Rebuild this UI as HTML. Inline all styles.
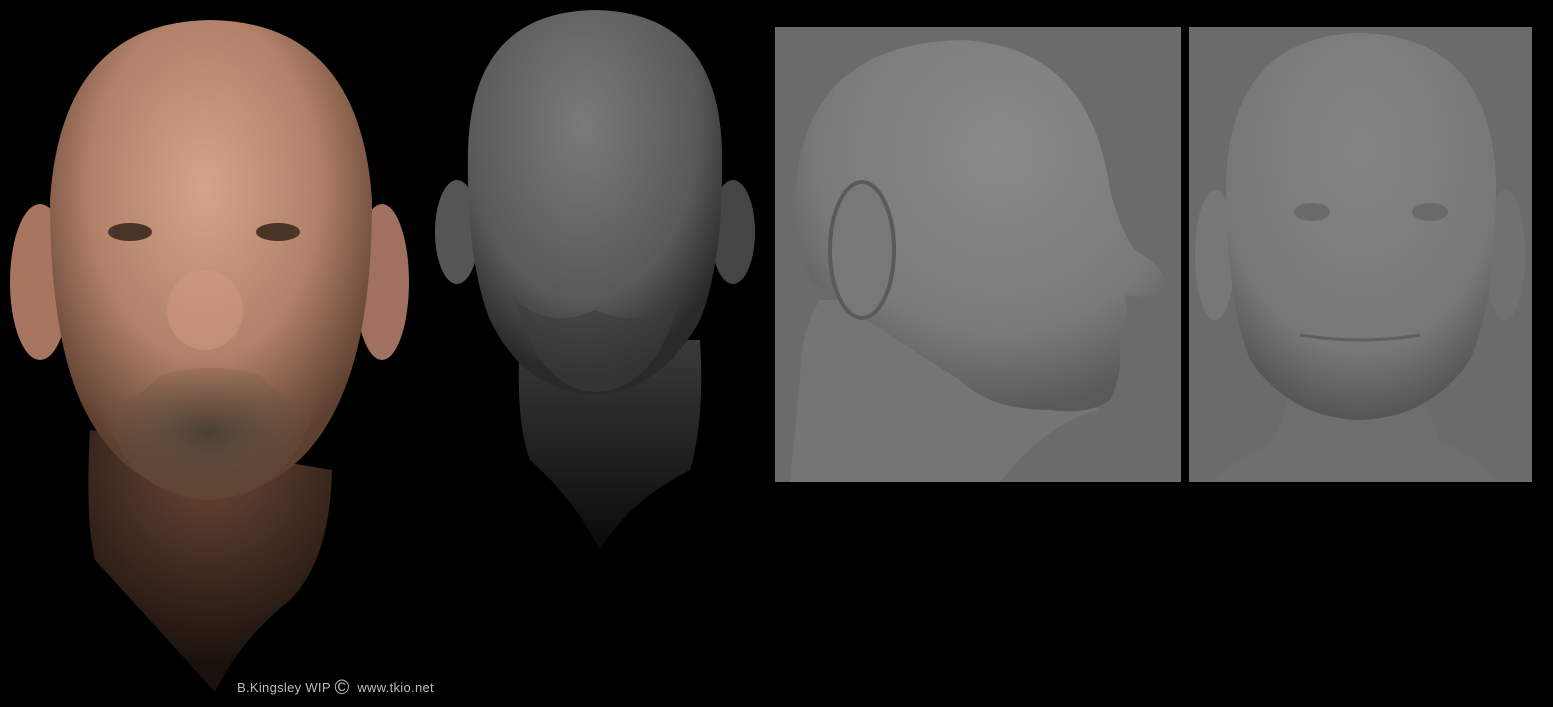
<!DOCTYPE html>
<html><head><meta charset="utf-8"><style>
html,body{margin:0;padding:0;background:#000;}
body{width:1553px;height:707px;overflow:hidden;position:relative;font-family:"Liberation Sans",sans-serif;}
.t{position:absolute;left:237px;top:677px;color:#b8bcc4;font-size:13px;letter-spacing:0.3px;white-space:nowrap;}
</style></head><body>
<svg width="1553" height="707" viewBox="0 0 1553 707" style="position:absolute;left:0;top:0">
<defs>
<radialGradient id="skin" cx="0.48" cy="0.35" r="0.6">
<stop offset="0" stop-color="#d3a48a"/><stop offset="0.6" stop-color="#b08068"/><stop offset="1" stop-color="#5e4030"/></radialGradient>
<radialGradient id="neck1" cx="0.5" cy="0.1" r="0.8">
<stop offset="0" stop-color="#6e4a38"/><stop offset="1" stop-color="#1a110c"/></radialGradient>
<radialGradient id="beard" cx="0.5" cy="0.5" r="0.5">
<stop offset="0" stop-color="#4a4034"/><stop offset="1" stop-color="#6b5442" stop-opacity="0.2"/></radialGradient>
<radialGradient id="g2" cx="0.45" cy="0.3" r="0.65">
<stop offset="0" stop-color="#7a7a7a"/><stop offset="0.7" stop-color="#595959"/><stop offset="1" stop-color="#2a2a2a"/></radialGradient>
<linearGradient id="n2" x1="0" y1="0" x2="0" y2="1"><stop offset="0" stop-color="#3a3a3a"/><stop offset="1" stop-color="#0a0a0a"/></linearGradient>
<radialGradient id="g3" cx="0.55" cy="0.3" r="0.7">
<stop offset="0" stop-color="#8a8a8a"/><stop offset="0.7" stop-color="#7a7a7a"/><stop offset="1" stop-color="#5a5a5a"/></radialGradient>
<radialGradient id="g4" cx="0.5" cy="0.3" r="0.7">
<stop offset="0" stop-color="#858585"/><stop offset="0.75" stop-color="#777"/><stop offset="1" stop-color="#555"/></radialGradient>
</defs>

<path d="M90 430 Q85 520 95 560 Q150 620 215 692 Q240 640 290 600 Q330 560 332 470 Z" fill="url(#neck1)"/>
<ellipse cx="40" cy="282" rx="30" ry="78" fill="#a87660"/>
<ellipse cx="382" cy="282" rx="27" ry="78" fill="#a07060"/>
<path d="M210 20 Q360 22 372 200 Q372 330 340 400 Q300 490 210 500 Q120 490 80 400 Q50 330 50 200 Q62 22 210 20 Z" fill="url(#skin)"/>
<path d="M95 380 Q120 500 210 500 Q300 495 322 380 Q300 420 260 375 Q210 360 160 375 Q120 420 95 380 Z" fill="url(#beard)"/>
<ellipse cx="130" cy="232" rx="22" ry="9" fill="#4a3426"/>
<ellipse cx="278" cy="232" rx="22" ry="9" fill="#4a3426"/>
<ellipse cx="205" cy="310" rx="38" ry="40" fill="#d29a80" opacity="0.5"/>

<path d="M520 340 Q515 420 530 460 Q575 500 600 550 Q630 500 690 470 Q705 420 700 340 Z" fill="url(#n2)"/>
<ellipse cx="457" cy="232" rx="22" ry="52" fill="#555"/>
<ellipse cx="733" cy="232" rx="22" ry="52" fill="#454545"/>
<path d="M595 10 Q718 12 722 150 Q724 260 700 320 Q660 392 595 395 Q525 392 490 320 Q466 260 468 150 Q472 12 595 10 Z" fill="url(#g2)"/>
<path d="M515 300 Q540 390 595 392 Q655 390 680 300 Q640 330 595 310 Q550 330 515 300 Z" fill="#3c3c3c" opacity="0.6"/>

<rect x="775" y="27" width="406" height="455" fill="#6b6b6b"/>
<path d="M790 482 L800 380 Q800 330 820 300 L1000 300 Q1060 390 1100 410 Q1050 420 1000 482 Z" fill="#757575"/>
<path d="M960 40 Q1090 45 1110 190 Q1120 230 1135 250 Q1170 270 1165 290 Q1155 300 1125 295 Q1130 320 1118 335 Q1125 370 1110 400 Q1090 415 1050 410 Q990 410 960 380 Q880 330 810 280 Q795 230 795 200 Q800 45 960 40 Z" fill="url(#g3)"/>
<ellipse cx="862" cy="250" rx="32" ry="68" fill="#787878" stroke="#5a5a5a" stroke-width="4"/>

<rect x="1189" y="27" width="343" height="455" fill="#6b6b6b"/>
<path d="M1290 360 Q1290 430 1260 450 Q1215 470 1215 482 L1500 482 Q1480 460 1440 440 Q1420 400 1425 360 Z" fill="#6e6e6e"/>
<ellipse cx="1215" cy="255" rx="20" ry="65" fill="#777"/>
<ellipse cx="1505" cy="255" rx="20" ry="65" fill="#717171"/>
<path d="M1360 33 Q1490 36 1496 180 Q1496 300 1470 360 Q1430 418 1360 420 Q1290 418 1250 360 Q1226 300 1226 180 Q1232 36 1360 33 Z" fill="url(#g4)"/>
<ellipse cx="1312" cy="212" rx="18" ry="9" fill="#6a6a6a"/>
<ellipse cx="1430" cy="212" rx="18" ry="9" fill="#6a6a6a"/>
<path d="M1300 335 Q1360 345 1420 335" stroke="#5e5e5e" stroke-width="3" fill="none"/>
</svg>
<div class="t">B.Kingsley WIP <span style="font-size:20px;vertical-align:-2px">©</span> &nbsp;www.tkio.net</div>
</body></html>
